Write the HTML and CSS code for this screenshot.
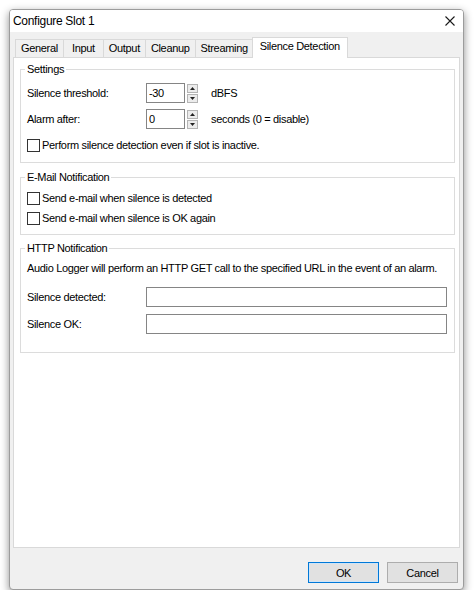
FILE: index.html
```html
<!DOCTYPE html>
<html lang="en">
<head>
<meta charset="utf-8">
<title>Configure Slot 1</title>
<link rel="stylesheet" href="styles.css">
</head>
<body>
<div class="window">
  <div class="titlebar">
    <span class="title">Configure Slot 1</span>
    <svg class="close" width="10" height="10" viewBox="0 0 10 10"><path d="M0.5 0.5L9.5 9.5M9.5 0.5L0.5 9.5" stroke="#1a1a1a" stroke-width="1.1" fill="none"/></svg>
  </div>
  <div class="client">
    <div class="tabs">
      <div class="tab">General</div>
      <div class="tab">Input</div>
      <div class="tab">Output</div>
      <div class="tab">Cleanup</div>
      <div class="tab">Streaming</div>
      <div class="tab active">Silence Detection</div>
    </div>
    <div class="panel">
      <fieldset class="group settings">
        <legend>Settings</legend>
        <div class="row">
          <span class="lbl">Silence threshold:</span>
          <div class="spin">
            <input class="field short" type="text" value="-30">
            <div class="spin-btns">
              <span class="spin-btn"><svg width="5" height="3" viewBox="0 0 5 3"><path d="M2.5 0L5 3H0z" fill="#222"/></svg></span>
              <span class="spin-btn"><svg width="5" height="3" viewBox="0 0 5 3"><path d="M0 0H5L2.5 3z" fill="#222"/></svg></span>
            </div>
          </div>
          <span class="unit">dBFS</span>
        </div>
        <div class="row">
          <span class="lbl">Alarm after:</span>
          <div class="spin">
            <input class="field short" type="text" value="0">
            <div class="spin-btns">
              <span class="spin-btn"><svg width="5" height="3" viewBox="0 0 5 3"><path d="M2.5 0L5 3H0z" fill="#222"/></svg></span>
              <span class="spin-btn"><svg width="5" height="3" viewBox="0 0 5 3"><path d="M0 0H5L2.5 3z" fill="#222"/></svg></span>
            </div>
          </div>
          <span class="unit">seconds (0 = disable)</span>
        </div>
        <label class="row check"><span class="box"></span><span>Perform silence detection even if slot is inactive.</span></label>
      </fieldset>

      <fieldset class="group email">
        <legend>E-Mail Notification</legend>
        <label class="row check"><span class="box"></span><span>Send e-mail when silence is detected</span></label>
        <label class="row check"><span class="box"></span><span>Send e-mail when silence is OK again</span></label>
      </fieldset>

      <fieldset class="group http">
        <legend>HTTP Notification</legend>
        <div class="row desc">Audio Logger will perform an HTTP GET call to the specified URL in the event of an alarm.</div>
        <div class="row url first">
          <span class="lbl">Silence detected:</span>
          <input class="field wide" type="text" value="">
        </div>
        <div class="row url">
          <span class="lbl">Silence OK:</span>
          <input class="field wide" type="text" value="">
        </div>
      </fieldset>
    </div>
    <div class="buttons">
      <button class="btn default" type="button">OK</button>
      <button class="btn" type="button">Cancel</button>
    </div>
  </div>
</div>
</body>
</html>
```

FILE: styles.css
```css
* {
  box-sizing: border-box;
}

html, body {
  margin: 0;
}

body {
  background: #ffffff;
  padding: 9px 0 0 9px;
  font-family: "Liberation Sans", Arial, sans-serif;
  font-size: 11px;
  letter-spacing: -0.33px;
  color: #000;
}

/* dialog frame */
.window {
  width: 455px;
  height: 581px;
  border: 1px solid #9c9c9c;
  border-radius: 4px;
  box-shadow: 0 3px 9px rgba(0, 0, 0, 0.45);
  background: #f0f0f0;
  display: flex;
  flex-direction: column;
  overflow: hidden;
}

.titlebar {
  height: 22px;
  background: #ffffff;
  display: flex;
  align-items: center;
  justify-content: space-between;
  padding: 0 8px 0 3px;
  flex: none;
}

.title {
  font-size: 12px;
  letter-spacing: -0.3px;
  color: #000;
}

.close {
  display: block;
}

.client {
  flex: 1;
  display: flex;
  flex-direction: column;
  padding: 5px 3px 0 3px;
}

/* tab strip */
.tabs {
  display: flex;
  align-items: flex-end;
  height: 21px;
  margin-bottom: -1px;
  padding-left: 2px;
  position: relative;
  z-index: 1;
  flex: none;
}

.tab {
  height: 18px;
  margin-bottom: 1px;
  line-height: 17px;
  min-width: 41px;
  padding: 0 5px;
  text-align: center;
  border: 1px solid #d9d9d9;
  border-bottom: none;
  background: #f0f0f0;
  margin-left: -1px;
  white-space: nowrap;
}

.tab:first-child {
  margin-left: 0;
}

.tab.active {
  height: 21px;
  margin-bottom: 0;
  line-height: 17px;
  background: #ffffff;
  margin-left: -2px;
  margin-right: -2px;
  padding: 0 7px;
}

.panel {
  flex: 1;
  background: #ffffff;
  border: 1px solid #d9d9d9;
  display: flex;
  flex-direction: column;
}

/* group boxes */
.group {
  margin: 0 4px 0 6px;
  border: 1px solid #dcdcdc;
  padding: 0 7px 0 6px;
  min-inline-size: 0;
}

.group legend {
  padding: 0 2px;
  margin-left: -2px;
  line-height: 13px;
}

.settings {
  margin-top: 5px;
  padding-top: 7px;
  padding-bottom: 7px;
  display: flex;
  flex-direction: column;
  gap: 6px;
}

.email {
  margin-top: 8px;
  padding-top: 4px;
  padding-bottom: 6px;
}

.http {
  margin-top: 7px;
  padding-top: 3px;
  padding-bottom: 18px;
}

.row {
  display: flex;
  align-items: center;
  height: 20px;
}

.lbl {
  width: 119px;
  flex: none;
}

.spin {
  display: flex;
  align-items: center;
  gap: 2px;
}

.field {
  height: 20px;
  border: 1px solid #858585;
  background: #ffffff;
  font-family: "Liberation Sans", Arial, sans-serif;
  font-size: 11px;
  letter-spacing: -0.33px;
  color: #000;
  padding: 0 2px;
  margin: 0;
  outline: none;
}

.field.short {
  width: 39px;
}

.field.wide {
  flex: 1;
  min-width: 0;
}

.spin-btns {
  display: flex;
  flex-direction: column;
  gap: 1px;
  width: 11px;
}

.spin-btn {
  height: 9px;
  border: 1px solid #b4b4b4;
  background: #ececec;
  display: flex;
  align-items: center;
  justify-content: center;
}

.spin-btn svg {
  display: block;
}

.unit {
  margin-left: 13px;
}

.check {
  gap: 2px;
}

.box {
  width: 13px;
  height: 13px;
  border: 1px solid #333333;
  background: #ffffff;
  flex: none;
}

.desc {
  white-space: nowrap;
}

.url.first {
  margin-top: 9px;
}

.url + .url {
  margin-top: 7px;
}

/* dialog buttons */
.buttons {
  height: 41px;
  flex: none;
  display: flex;
  justify-content: flex-end;
  align-items: flex-start;
  gap: 8px;
  padding: 14px 2px 0 0;
}

.btn {
  width: 71px;
  height: 21px;
  border: 1px solid #adadad;
  background: #e1e1e1;
  font-family: "Liberation Sans", Arial, sans-serif;
  font-size: 11px;
  letter-spacing: -0.33px;
  color: #000;
  padding: 0;
  margin: 0;
}

.btn.default {
  border: 1px solid #0078d7;
  box-shadow: inset 0 0 0 1px #cfe4f7;
}
```
